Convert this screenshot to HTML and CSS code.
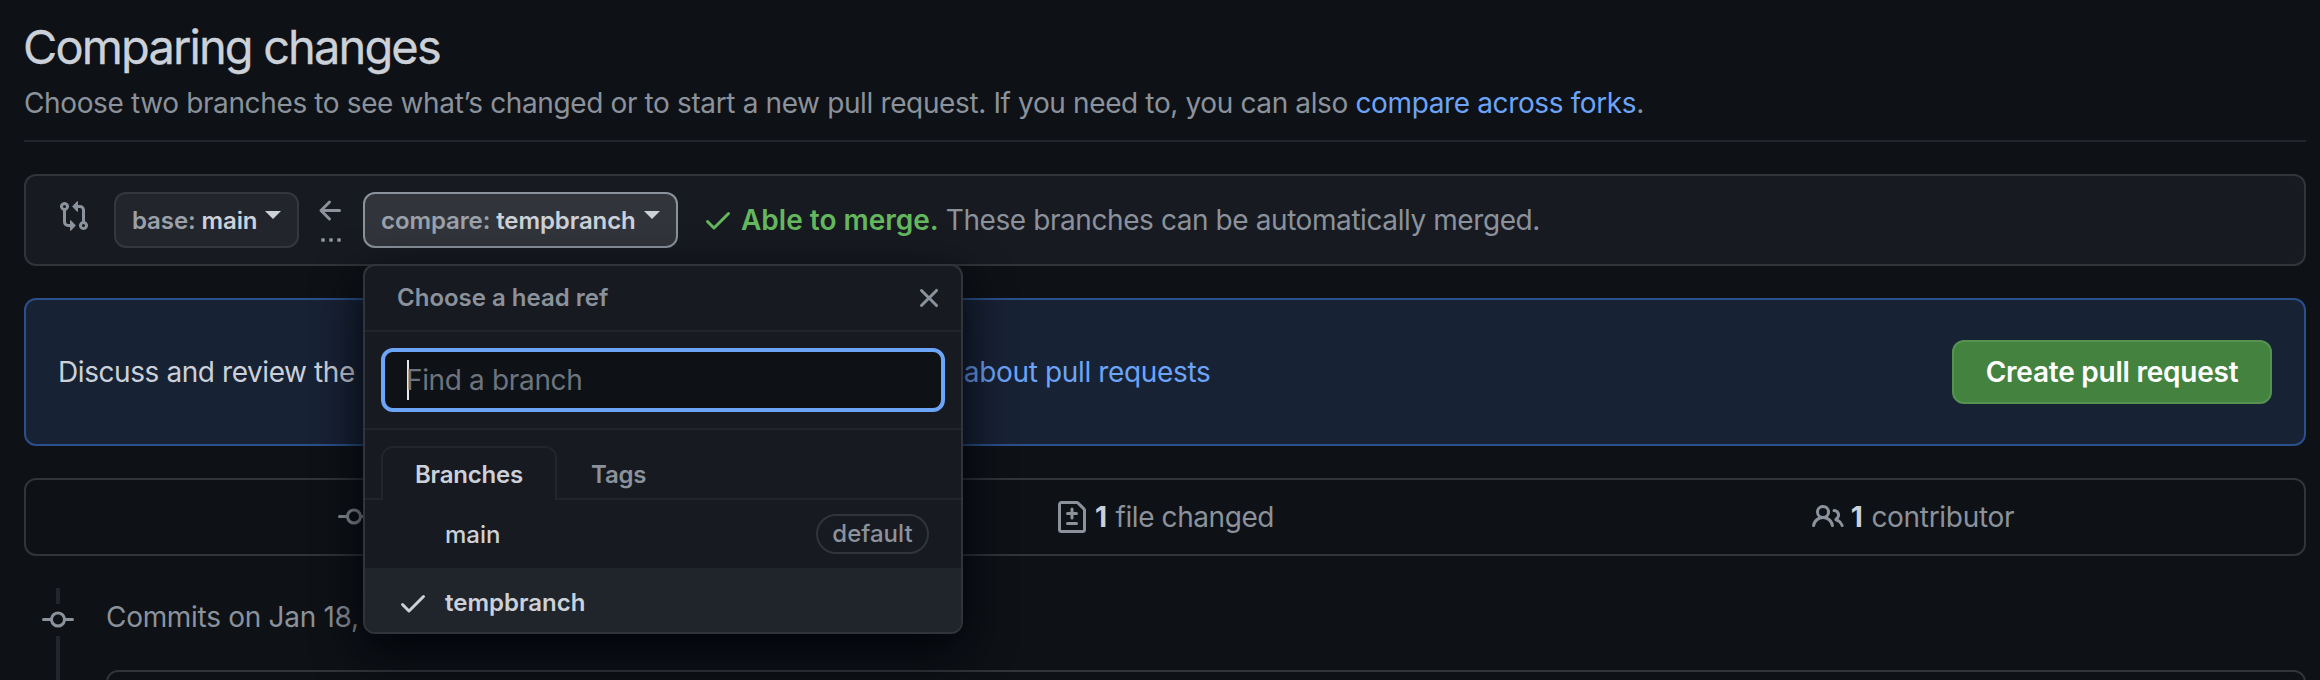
FILE: index.html
```html
<!DOCTYPE html>
<html lang="en">
<head>
<meta charset="utf-8">
<title>Comparing changes</title>
<link rel="stylesheet" href="styles.css">
</head>
<body>
<main class="page">
  <header class="head">
    <h1 class="title">Comparing changes</h1>
    <p class="subtitle">Choose two branches to see what’s changed or to start a new pull request. If you need to, you can also <a class="link">compare across forks</a>.</p>
  </header>

  <section class="range">
    <svg class="icon range-icon" viewBox="0 0 16 16" width="32" height="32"><path fill-rule="evenodd" d="M9.573.677L7.177 3.073a.25.25 0 000 .354l2.396 2.396A.25.25 0 0010 5.646V4h1a1 1 0 011 1v5.628a2.251 2.251 0 101.5 0V5A2.5 2.5 0 0011 2.5h-1V.854a.25.25 0 00-.427-.177zM12 12.75a.75.75 0 111.5 0 .75.75 0 01-1.5 0zM6 12v-1.646a.25.25 0 01.427-.177l2.396 2.396a.25.25 0 010 .354l-2.396 2.396A.25.25 0 016 15.146V13.5H5A2.5 2.5 0 012.5 11V5.372a2.25 2.25 0 111.5 0V11a1 1 0 001 1h1zM4 3.25a.75.75 0 11-1.5 0 .75.75 0 011.5 0z"/></svg>
    <button class="ref-btn base-btn"><span><span class="dim">base:</span> main</span><i class="caret"></i></button>
    <div class="arrow">
      <svg class="icon" viewBox="0 0 16 16" width="32" height="32"><path fill-rule="evenodd" d="M7.78 12.53a.75.75 0 01-1.06 0L2.47 8.28a.75.75 0 010-1.06l4.25-4.25a.75.75 0 011.06 1.06L4.81 7h7.44a.75.75 0 010 1.5H4.81l2.97 2.97a.75.75 0 010 1.06z"/></svg>
      <span class="dots"><i></i><i></i><i></i></span>
    </div>
    <div class="compare">
      <button class="ref-btn compare-btn"><span><span class="dim">compare:</span> tempbranch</span><i class="caret"></i></button>
      <div class="popover">
        <div class="pop-head">
          <span>Choose a head ref</span>
          <svg class="icon" viewBox="0 0 16 16" width="32" height="32"><path fill-rule="evenodd" d="M3.72 3.72a.75.75 0 011.06 0L8 6.94l3.22-3.22a.75.75 0 111.06 1.06L9.06 8l3.22 3.22a.75.75 0 11-1.06 1.06L8 9.06l-3.22 3.22a.75.75 0 01-1.06-1.06L6.94 8 3.72 4.78a.75.75 0 010-1.06z"/></svg>
        </div>
        <div class="pop-filter"><div class="field"><i class="cursor"></i><span>Find a branch</span></div></div>
        <div class="tabs">
          <div class="tab active">Branches</div>
          <div class="tab">Tags</div>
        </div>
        <div class="row">
          <span class="check"></span>
          <span class="name">main</span>
          <span class="pill">default</span>
        </div>
        <div class="row selected">
          <svg class="check" viewBox="0 0 16 16" width="32" height="32"><path fill-rule="evenodd" d="M13.78 4.22a.75.75 0 010 1.06l-7.25 7.25a.75.75 0 01-1.06 0L2.22 9.28a.75.75 0 011.06-1.06L6 10.94l6.72-6.72a.75.75 0 011.06 0z"/></svg>
          <span class="name">tempbranch</span>
        </div>
      </div>
    </div>
    <div class="merge">
      <svg class="merge-check" viewBox="0 0 16 16" width="32" height="32"><path fill-rule="evenodd" d="M13.78 4.22a.75.75 0 010 1.06l-7.25 7.25a.75.75 0 01-1.06 0L2.22 9.28a.75.75 0 011.06-1.06L6 10.94l6.72-6.72a.75.75 0 011.06 0z"/></svg>
      <strong>Able to merge.</strong>
      <span>These branches can be automatically merged.</span>
    </div>
  </section>

  <section class="notice">
    <p class="notice-text">Discuss and review the changes in this comparison with others. <a class="link learn">Learn about pull requests</a></p>
    <button class="create">Create pull request</button>
  </section>

  <section class="stats">
    <div class="stat">
      <svg class="icon" viewBox="0 0 16 16" width="32" height="32"><path fill-rule="evenodd" d="M10.5 7.75a2.5 2.5 0 11-5 0 2.5 2.5 0 015 0zm1.43.75a4.002 4.002 0 01-7.86 0H.75a.75.75 0 110-1.5h3.32a4.001 4.001 0 017.86 0h3.32a.75.75 0 110 1.5h-3.32z"/></svg>
      <strong>1</strong><span>commit</span>
    </div>
    <div class="stat">
      <svg class="icon" viewBox="0 0 16 16" width="32" height="32"><path fill-rule="evenodd" d="M2.75 1.5a.25.25 0 00-.25.25v12.5c0 .138.112.25.25.25h10.5a.25.25 0 00.25-.25V4.664a.25.25 0 00-.073-.177l-2.914-2.914a.25.25 0 00-.177-.073H2.75zM1 1.75C1 .784 1.784 0 2.75 0h7.586c.464 0 .909.184 1.237.513l2.914 2.914c.329.328.513.773.513 1.237v9.586A1.75 1.75 0 0113.25 16H2.75A1.75 1.75 0 011 14.25V1.75zm7 1.5a.75.75 0 01.75.75v1.5h1.5a.75.75 0 010 1.5h-1.5v1.5a.75.75 0 01-1.5 0V7h-1.5a.75.75 0 010-1.5h1.5V4A.75.75 0 018 3.25zm-3 8a.75.75 0 01.75-.75h4.5a.75.75 0 010 1.5h-4.5a.75.75 0 01-.75-.75z"/></svg>
      <strong>1</strong><span>file changed</span>
    </div>
    <div class="stat">
      <svg class="icon" viewBox="0 0 16 16" width="32" height="32"><path fill-rule="evenodd" d="M5.5 3.5a2 2 0 100 4 2 2 0 000-4zM2 5.5a3.5 3.5 0 115.898 2.549 5.507 5.507 0 013.034 4.084.75.75 0 11-1.482.235 4.001 4.001 0 00-7.9 0 .75.75 0 01-1.482-.236A5.507 5.507 0 013.102 8.05 3.49 3.49 0 012 5.5zM11 4a.75.75 0 100 1.5 1.5 1.5 0 01.666 2.844.75.75 0 00-.416.672v.352a.75.75 0 00.574.73c1.2.289 2.162 1.2 2.522 2.372a.75.75 0 101.434-.44 5.01 5.01 0 00-2.56-3.012A3 3 0 0011 4z"/></svg>
      <strong>1</strong><span class="contributor">contributor</span>
    </div>
  </section>

  <section class="timeline">
    <div class="rail">
      <i class="rail-top"></i>
      <svg class="icon" viewBox="0 0 16 16" width="32" height="32"><path fill-rule="evenodd" d="M10.5 7.75a2.5 2.5 0 11-5 0 2.5 2.5 0 015 0zm1.43.75a4.002 4.002 0 01-7.86 0H.75a.75.75 0 110-1.5h3.32a4.001 4.001 0 017.86 0h3.32a.75.75 0 110 1.5h-3.32z"/></svg>
      <i class="rail-rest"></i>
    </div>
    <div class="group">
      <h2 class="group-title">Commits on Jan 18, 2022</h2>
      <div class="commit-list"></div>
    </div>
  </section>
</main>
</body>
</html>
```

FILE: styles.css
```css
* { box-sizing: border-box; }
html, body { margin: 0; height: 680px; overflow: hidden; background: #0e1116; }
body { font-family: Inter, "Liberation Sans", sans-serif; font-size: 28px; line-height: 42px; letter-spacing: -.42px; color: #ccd1d9; }
h1, h2, p { margin: 0; font-weight: 400; }
button { font: inherit; color: inherit; margin: 0; }
svg { display: block; flex: none; }
.icon { fill: #8b929b; }
.link { color: #6ca4f8; }
.page { width: 2320px; height: 680px; padding: 0 14px 0 24px; overflow: hidden; }

.head { height: 142px; border-bottom: 2px solid #22262c; padding-top: 11px; }
.title { font-size: 47px; line-height: 72px; height: 71px; margin-left: -1px; letter-spacing: -1.88px; -webkit-text-stroke: .3px currentColor; white-space: nowrap; }
.subtitle { color: #8b929b; letter-spacing: -.37px; white-space: nowrap; }

.range { display: flex; align-items: center; height: 92px; margin-top: 32px; padding-left: 32px; background: #171a21; border: 2px solid #313438; border-radius: 12px; }
.range-icon { margin: -8px 24px 0 0; }
.ref-btn { display: flex; align-items: center; height: 56px; padding: 2px 16px 0; border: 2px solid #34383e; border-radius: 12px; background: #22252c; font-size: 24px; line-height: 36px; font-weight: 600; letter-spacing: 0; white-space: nowrap; }
.base-btn { width: 185px; }
.compare-btn { width: 315px; background: #31353b; border-color: #8b929b; }
.dim { color: #9ba1aa; }
.base-btn, .compare-btn { letter-spacing: -.1px; }
.caret { border: 8px solid transparent; border-top-color: currentColor; border-bottom: 0; margin: -12px 0 0 8px; }
.arrow { display: flex; flex-direction: column; align-items: center; width: 64px; height: 56px; padding-top: 3px; }
.dots { display: flex; gap: 4px; margin-top: 11px; }
.dots i { width: 4px; height: 4px; border-radius: 2px; background: #8b929b; }
.compare { position: relative; }
.merge { display: flex; align-items: center; margin-left: 24px; color: #8b929b; white-space: nowrap; }
.merge-check { fill: #64b75d; margin-right: 7px; }
.merge strong { color: #64b75d; font-weight: 600; letter-spacing: 0; margin-right: 7px; }

.popover { position: absolute; z-index: 2; left: 0; top: 72px; width: 600px; height: 370px; background: #171a21; border: 2px solid #313438; border-radius: 12px; box-shadow: 0 16px 48px #010409; overflow: hidden; font-size: 24px; line-height: 36px; letter-spacing: 0; }
.pop-head { display: flex; align-items: center; justify-content: space-between; height: 66px; padding: 0 16px 0 32px; border-bottom: 2px solid #22252c; font-weight: 600; color: #8b929b; }
.pop-filter { height: 98px; padding: 16px; border-bottom: 2px solid #22252c; }
.field { display: flex; align-items: center; height: 64px; padding-left: 22px; background: #0e1116; border: 4px solid #6ca4f8; border-radius: 12px; color: #6d747e; font-size: 28px; letter-spacing: -.35px; }
.cursor { width: 2px; height: 40px; background: #e6e9ee; margin-right: -3px; }
.tabs { display: flex; height: 70px; padding: 16px 16px 0; box-shadow: inset 0 -2px #22252c; }
.tab { height: 54px; padding: 9px 32px 0; color: #8b929b; font-weight: 600; letter-spacing: -.2px; border: 2px solid transparent; border-bottom: 0; }
.tab.active { width: 176px; color: #ccd1d9; background: #171a21; border-color: #22252c; border-radius: 12px 12px 0 0; }
.row { display: flex; align-items: center; flex: none; height: 68px; padding: 1px 32px 0; font-weight: 500; }
.row.selected { background: #20242b; font-weight: 600; padding-top: 2px; }
.check { width: 32px; margin-right: 16px; fill: #ccd1d9; }
.name { flex: 1; }
.pill { display: flex; align-items: center; justify-content: center; width: 113px; height: 40px; margin-top: -1px; border: 2px solid #313438; border-radius: 20px; color: #8b929b; }

.notice { display: flex; align-items: center; justify-content: space-between; height: 148px; margin-top: 32px; padding: 0 32px; background: #182235; border: 2px solid #2b4f8a; border-radius: 12px; white-space: nowrap; }
.learn { margin-left: 2px; letter-spacing: -.35px; }
.create { width: 320px; height: 64px; background: #44833f; border: 2px solid #559150; border-radius: 12px; color: #fff; font-weight: 600; letter-spacing: -.23px; padding: 0; }

.stats { display: grid; grid-template-columns: repeat(3, 1fr); height: 78px; margin-top: 32px; padding: 0 17px; border: 2px solid #313438; border-radius: 12px; color: #8b929b; }
.stat { display: flex; align-items: center; justify-content: center; white-space: nowrap; }
.stat:first-child { padding-right: 4px; }
.stat strong { color: #ccd1d9; margin: 0 9px 0 7px; }
.contributor { letter-spacing: -.3px; }

.timeline { display: flex; margin-top: 32px; }
.rail { display: flex; flex-direction: column; align-items: center; width: 32px; margin: 0 32px 0 18px; height: 92px; }
.rail-top { width: 4px; height: 16px; background: #22262c; }
.rail-rest { width: 4px; flex: 1; background: #22262c; }
.group { flex: 1; height: 92px; overflow: hidden; }
.group-title { font-size: 28px; line-height: 42px; height: 82px; padding-top: 8px; color: #8b929b; letter-spacing: -.3px; white-space: nowrap; }
.commit-list { height: 60px; border: 2px solid #313438; border-radius: 12px; }
```
